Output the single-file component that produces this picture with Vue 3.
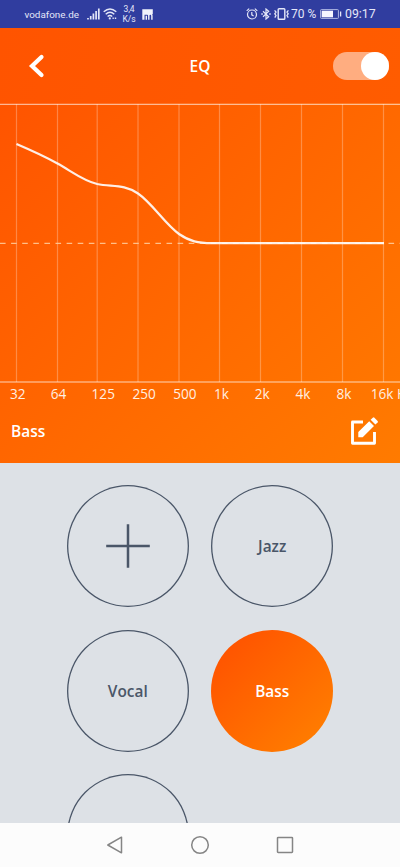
<script setup>
const gridLines = [16.5, 57.5, 97.2, 138, 179, 219.5, 260.5, 301.5, 342.5, 383.5]
const bands = ['32', '64', '125', '250', '500', '1k', '2k', '4k', '8k', '16k Hz']
const presets = [
  { id: 'add', label: '' },
  { id: 'jazz', label: 'Jazz' },
  { id: 'vocal', label: 'Vocal' },
  { id: 'bass', label: 'Bass' },
  { id: 'more', label: '' },
]
</script>

<template>
  <div class="screen">
    <div class="status">
      <span class="carrier">vodafone.de</span>
      <svg class="signal" width="13" height="12" viewBox="0 0 13 12">
        <path d="M1 10v1.6M3.7 8v3.6M6.4 5.6v6M9.1 3v8.6M11.8.5v11.1" stroke="#e4e7f8" stroke-width="1.7" />
      </svg>
      <svg class="wifi" width="14" height="12" viewBox="0 0 14 12" fill="none" stroke="#e4e7f8">
        <path d="M.7 3.8Q7-1.8 13.3 3.8M2.7 6.2Q7 2.4 11.3 6.2M4.6 8.5Q7 6.4 9.2 8.5" stroke-width="1.4" />
        <circle cx="6.8" cy="10.4" r="1.1" fill="#e4e7f8" stroke="none" />
        <path d="M9.5 10.3h1.3M11.8 10.3h1.4" stroke-width="1.6" />
      </svg>
      <span class="speed"><span>3,4</span><span>K/s</span></span>
      <svg class="app-mark" width="11" height="11" viewBox="0 0 11 11">
        <path d="M.3.2h10.5v5H9.8Q10.6 5.5 10.6 6.5v4.2H9.2V6.8Q9.2 5.8 8.3 5.8T7.5 6.8v3.9H6.1V6.8Q6.1 5.8 5.2 5.8H2.5v4.900H.3zM3.600 6.800H5v3.900H3.600z" fill="#f1f3fc" />
      </svg>
      <span class="spacer"></span>
      <svg class="alarm" width="12" height="12" viewBox="0 0 11 12" fill="none" stroke="#e4e7f8">
        <circle cx="5.5" cy="6.5" r="4.5" stroke-width="1.2" />
        <path d="M5.3 4v2.8l1.8 1.1M.2 2.9 2.7.6M8.3.6l2.5 2.3" stroke-width="1.2" />
      </svg>
      <svg class="bluetooth" width="10" height="12" viewBox="0 0 10 12" fill="none" stroke="#e4e7f8" stroke-width="1.2">
        <path d="M2 3.2 7.7 8.7 5 11V1l2.7 2.3L2 8.8" />
        <path d="M.3 6h1.5M8.2 6h1.5" stroke-width="1.4" />
      </svg>
      <svg class="vibrate" width="15" height="12" viewBox="0 0 15 12" fill="none" stroke="#e4e7f8">
        <rect x="4.2" y=".8" width="6.6" height="10.4" rx=".8" stroke-width="1.4" />
        <path d="M.6 2.4 2 4 .8 5.8 2 7.6.8 9.6M14.4 2.4 13 4l1.2 1.8L13 7.6l1.2 2" stroke-width="1.3" />
      </svg>
      <span class="pct">70 %</span>
      <svg class="battery" width="22" height="10" viewBox="0 0 22 10">
        <rect x=".6" y=".6" width="17.8" height="8.8" rx=".7" fill="none" stroke="#aeb7e2" stroke-width="1" />
        <rect x="1.7" y="1.7" width="11.3" height="6.6" fill="#f5f6ff" />
        <path d="M20.6 2.5v5" stroke="#e4e7f8" stroke-width="1.3" />
      </svg>
      <span class="clock">09:17</span>
    </div>

    <header class="bar">
      <svg class="back" width="18" height="26" viewBox="0 0 18 26">
        <path d="M14.5 4 5 13l9.5 9" fill="none" stroke="#fff" stroke-width="4.2" stroke-linecap="round" />
      </svg>
      <h1>EQ</h1>
      <div class="toggle"><span class="knob"></span></div>
    </header>

    <section class="eq">
      <svg class="chart" width="400" height="280" viewBox="0 103 400 280" fill="none">
        <path v-for="x in gridLines" :key="x" :d="`M${x} 104V382`" stroke="#fff" stroke-opacity=".27" stroke-width="1.2" />
        <path d="M0 104.4H400" stroke="#fff" stroke-opacity=".58" stroke-width="1.3" />
        <path d="M0 382H400" stroke="#fff" stroke-opacity=".36" stroke-width="2" />
        <path d="M0 243.4H400" stroke="#ffd0a0" stroke-opacity=".85" stroke-width="1.1" stroke-dasharray="5.6 5.5" />
        <path
          d="M16.5 144C31 150.2 44 156 57.5 163.5C72 171.5 83 180.7 97.2 184C112 187 124 184 138 193.5C152 203 165 224 179 234C190 241.5 198 243.2 212 243.2H384"
          stroke="#fff" stroke-opacity=".9" stroke-width="2.2"
        />
      </svg>

      <div class="bands">
        <span v-for="band in bands" :key="band">{{ band }}</span>
      </div>

      <div class="current">
        <strong>Bass</strong>
        <svg width="30" height="30" viewBox="0 0 30 30">
          <path d="M14 6H3.5V27.3H25.5V16" fill="none" stroke="#fff" stroke-width="2.9" stroke-linejoin="round" />
          <path d="M9.3 21.2V16L20.2 5.2l4.8 4.8L14.2 20.7q-.5.5-1.3.5z" fill="#fff" />
          <path d="M21.6 3.8 23.8 1.7q.8-.7 1.6 0l3.2 3.2q.7.8 0 1.6L26.4 8.6z" fill="#fff" />
        </svg>
      </div>
    </section>

    <main class="presets">
      <div v-for="p in presets" :key="p.id" class="preset" :class="{ active: p.id === 'bass' }">
        <svg v-if="p.id === 'add'" width="44" height="44" viewBox="0 0 44 44">
          <path d="M22 .2v43.6M.2 22h43.6" stroke="#4a5668" stroke-width="2.5" />
        </svg>
        <span v-else>{{ p.label }}</span>
      </div>
    </main>

    <nav class="nav">
      <svg width="18" height="20" viewBox="0 0 18 20">
        <path d="M15.5 2.2V17.8L1.8 10z" fill="none" stroke="#858585" stroke-width="1.5" stroke-linejoin="round" />
      </svg>
      <svg width="20" height="20" viewBox="0 0 20 20">
        <circle cx="10" cy="10" r="8.3" fill="none" stroke="#858585" stroke-width="1.5" />
      </svg>
      <svg width="18" height="20" viewBox="0 0 18 20">
        <rect x="1.5" y="2.4" width="15" height="15" rx=".7" fill="none" stroke="#858585" stroke-width="1.5" />
      </svg>
    </nav>
  </div>
</template>

<style>
body {
  margin: 0;
  overflow: hidden;
}
</style>

<style scoped>
.screen {
  display: flex;
  flex-direction: column;
  width: 400px;
  height: 867px;
  overflow: hidden;
  font-family: "Open Sans", "Noto Sans", sans-serif;
}
svg {
  display: block;
  flex: none;
}
.status {
  display: flex;
  align-items: center;
  box-sizing: border-box;
  height: 28px;
  flex: none;
  padding: 0 24px 0 24.5px;
  background: #303d9f;
  color: #e4e7f8;
  font-family: Roboto, sans-serif;
  white-space: nowrap;
}
.carrier {
  width: 62.5px;
  font-size: 9.9px;
}
.wifi {
  margin-left: 3px;
}
.speed {
  display: flex;
  flex-direction: column;
  align-items: center;
  width: 14px;
  margin-left: 5px;
  font-size: 8.5px;
  line-height: 10px;
}
.app-mark {
  margin-left: 6px;
}
.spacer {
  flex: 1;
}
.bluetooth {
  margin-left: 3px;
}
.vibrate {
  margin-left: 3px;
}
.pct {
  width: 26px;
  margin-left: 2.5px;
  font-size: 12px;
}
.battery {
  margin-left: 3px;
}
.clock {
  width: 31px;
  margin-left: 3px;
  font-size: 12.3px;
}
.bar {
  display: grid;
  grid-template-columns: 1fr auto 1fr;
  align-items: center;
  box-sizing: border-box;
  height: 75px;
  flex: none;
  padding: 0 11px 0 27px;
  background: linear-gradient(100deg, #ff5400 0%, #ff5c00 100%);
  color: #fff;
}
.bar h1 {
  margin: 1px 0 0 -16px;
  font-size: 15.5px;
  font-weight: 600;
  line-height: 20px;
}
.toggle {
  display: flex;
  justify-content: flex-end;
  justify-self: end;
  width: 56px;
  height: 28px;
  border-radius: 14px;
  background: rgba(255, 255, 255, 0.5);
}
.knob {
  width: 28px;
  height: 28px;
  border-radius: 50%;
  background: #fff;
}
.eq {
  display: flex;
  flex-direction: column;
  height: 360px;
  flex: none;
  background: linear-gradient(135deg, #ff5400 0%, #ff7b00 100%);
  color: #fff;
}
.bands {
  display: grid;
  grid-template-columns: repeat(10, 40.8px);
  height: 22px;
  padding-left: 10px;
  overflow: hidden;
  font-size: 13.6px;
  line-height: 21px;
  white-space: nowrap;
  color: #fff0e2;
}
.bands span:last-child {
  margin-left: -6.5px;
}
.current {
  display: flex;
  align-items: center;
  justify-content: space-between;
  height: 52px;
  padding: 0 21px 4px 11px;
}
.current strong {
  font-size: 15.5px;
  font-weight: 600;
}
.presets {
  display: grid;
  grid-template-columns: repeat(2, 122px);
  grid-auto-rows: 122px;
  align-content: start;
  justify-content: center;
  gap: 22.4px;
  flex: 1;
  min-height: 0;
  box-sizing: border-box;
  padding-top: 22.4px;
  overflow: hidden;
  background: #dde1e6;
}
.preset {
  display: flex;
  align-items: center;
  justify-content: center;
  border-radius: 50%;
  box-shadow: inset 0 0 0 1.3px #4a5668;
  color: #4a5668;
  font-size: 15.4px;
  font-weight: 600;
}
.preset span {
  margin-top: 1px;
}
.preset.active {
  background: linear-gradient(135deg, #ff5300 10%, #ff7d00 90%);
  box-shadow: none;
  color: #fff;
}
.nav {
  display: flex;
  align-items: center;
  justify-content: center;
  gap: 66px;
  height: 44px;
  flex: none;
  background: #fcfcfc;
}
</style>
